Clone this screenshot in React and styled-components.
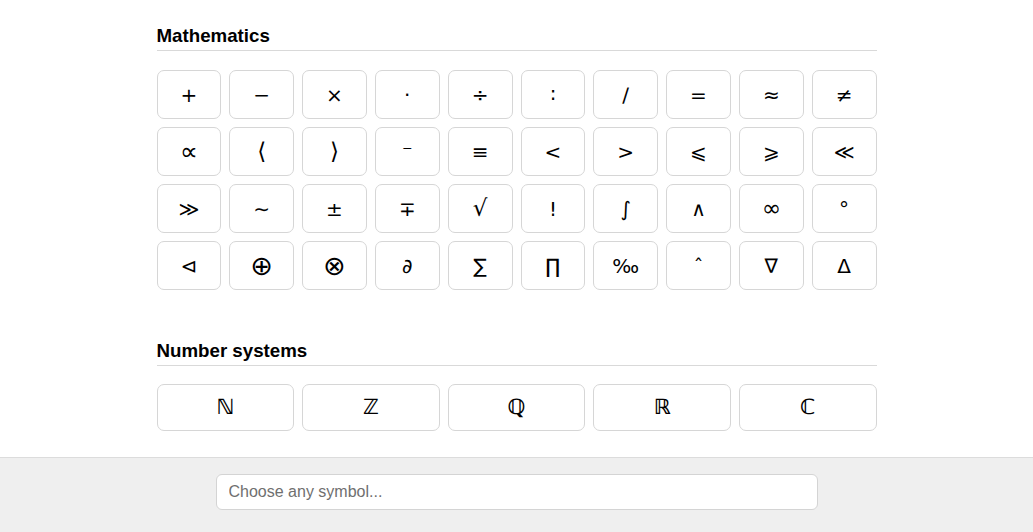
import styled, { createGlobalStyle } from 'styled-components';
import { useState } from 'react';

// some glyphs come out smaller in DejaVu than in the original page, so they get a bigger size
const big = { '∝': 25, '⊕': 27, '⊗': 27, '√': 23, '⟨': 23, '⟩': 23, '∞': 23 };

const sections = [
  {
    title: 'Mathematics',
    columns: 10,
    symbols: [
      '+', '−', '×', '·', '÷', '∶', '∕', '=', '≈', '≠',
      '∝', '⟨', '⟩', '⁻', '≡', '<', '>', '⩽', '⩾', '≪',
      '≫', '∼', '±', '∓', '√', '!', '∫', '∧', '∞', '°',
      '⊲', '⊕', '⊗', '∂', '∑', '∏', '‰', 'ˆ', '∇', 'Δ',
    ],
  },
  {
    title: 'Number systems',
    columns: 5,
    symbols: ['ℕ', 'ℤ', 'ℚ', 'ℝ', 'ℂ'],
  },
];

function App() {
  const [query, setQuery] = useState('');

  return (
    <>
      <GlobalStyle />
      <Page>
        <Main>
          {sections.map((section) => (
            <Section key={section.title}>
              <Heading>{section.title}</Heading>
              <Grid $columns={section.columns}>
                {section.symbols.map((s) => (
                  <SymbolButton key={s} $wide={section.columns === 5} $size={big[s]}>{s}</SymbolButton>
                ))}
              </Grid>
            </Section>
          ))}
        </Main>
        <Footer>
          <Search
            type="text"
            placeholder="Choose any symbol..."
            value={query}
            onChange={(e) => setQuery(e.target.value)}
          />
        </Footer>
      </Page>
    </>
  );
}

export default App;

const GlobalStyle = createGlobalStyle`
    html, body {
    margin: 0;
    padding: 0;
    background: #fff;
    }

    body {
    font-family: "Liberation Sans", Arial, "DejaVu Sans", sans-serif;
    color: #000;
    }
`;

const Page = styled.div`
    min-height: 100vh;
    display: flex;
    flex-direction: column;
`;

const Main = styled.main`
    width: 720px;
    margin: 0 auto;
    padding-top: 25px;
    flex: 1;
    display: flex;
    flex-direction: column;
    gap: 50px;
`;

const Section = styled.section`
    display: flex;
    flex-direction: column;
`;

const Heading = styled.h3`
    margin: 0;
    font-size: 18.72px;
    line-height: 21px;
    font-weight: bold;
    padding-bottom: 4px;
    border-bottom: 1px solid #d9d9d9;
`;

const Grid = styled.div`
    margin-top: ${(p) => (p.$columns > 5 ? '19px' : '18px')};
    display: grid;
    grid-template-columns: repeat(${(p) => p.$columns}, 1fr);
    gap: 8px;
`;

const SymbolButton = styled.button`
    height: ${(p) => (p.$wide ? '47px' : '49px')};
    border: 1px solid #d6d6d6;
    border-radius: 7px;
    background: #fff;
    font-family: "DejaVu Sans", "Liberation Sans", sans-serif;
    font-size: ${(p) => (p.$size ? p.$size : p.$wide ? 21 : 20)}px;
    font-weight: ${(p) => (p.$wide ? 'bold' : 'normal')};
    line-height: 1;
    color: #000;
    display: flex;
    align-items: center;
    justify-content: center;
    padding: 0;
    cursor: pointer;
`;

const Footer = styled.footer`
    margin-top: 26px;
    background: #efefef;
    border-top: 1px solid #dcdcdc;
    display: flex;
    justify-content: center;
    padding: 16px 0 22px;
`;

const Search = styled.input`
    width: 602px;
    height: 36px;
    box-sizing: border-box;
    border: 1px solid #d4d4d4;
    border-radius: 6px;
    padding: 0 12px;
    font-family: "Liberation Sans", Arial, sans-serif;
    font-size: 16px;
    background: #fff;
    outline: none;

    &::placeholder {
    color: #6f6f6f;
    }
`;
